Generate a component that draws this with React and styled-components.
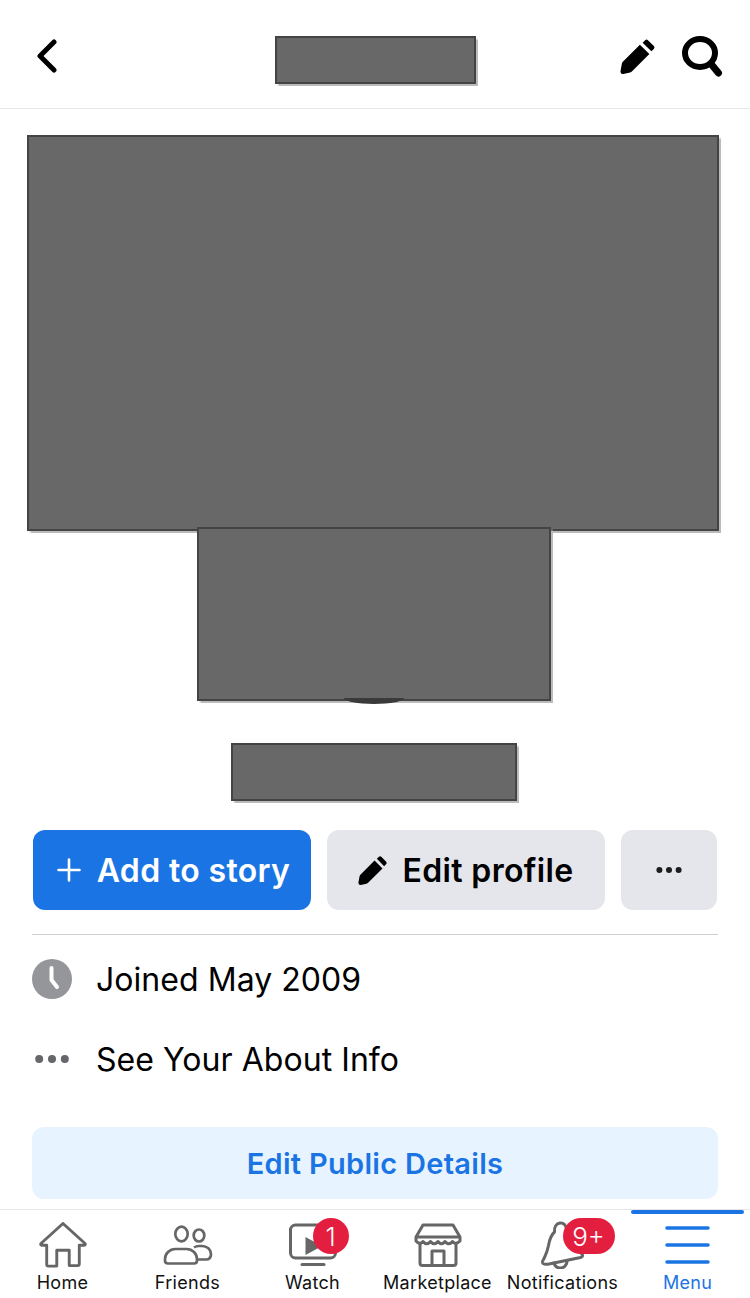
import React from "react";
import styled, { createGlobalStyle } from "styled-components";

const GlobalStyle = createGlobalStyle`
	html, body {
		margin: 0;
		padding: 0;
		background: #fff;
		font-family: Inter, "Liberation Sans", sans-serif;
	}
	* {
		box-sizing: border-box;
	}
`;

const TABS = [
	{ label: "Home", icon: <HomeIcon /> },
	{ label: "Friends", icon: <FriendsIcon /> },
	{ label: "Watch", icon: <WatchIcon />, badge: "1" },
	{ label: "Marketplace", icon: <ShopIcon /> },
	{ label: "Notifications", icon: <BellIcon />, badge: "9+" },
	{ label: "Menu", icon: <MenuIcon />, active: true },
];

function HomeIcon() {
	return (
		<svg width="48" height="46" viewBox="0 0 50 48" fill="none" stroke="#666" strokeWidth="3" strokeLinejoin="round" strokeLinecap="round">
			<path d="M2 22.5 25 1.5l23 21c.6.8.2 1.700-.8 1.700H42v19.600c0 1-.7 1.700-1.700 1.700H31.500V29.500h-13v16.500H9.700c-1 0-1.700-.7-1.700-1.700V24.200H2.800c-1 0-1.400-.9-.8-1.700Z" />
		</svg>
	);
}

function FriendsIcon() {
	return (
		<svg width="50" height="40" viewBox="0 0 50 40" fill="none" stroke="#666" strokeWidth="2.700">
			<ellipse cx="18.500" cy="9" rx="6.200" ry="7.300" />
			<ellipse cx="36" cy="10.500" rx="5.300" ry="6" />
			<path d="M5 38.500h26q3 0 3-3v-1c0-6-4.500-10.500-10.500-10.500h-11C6.500 24 2 28.500 2 34.500v1q0 3 3 3Z" />
			<path d="M31 22.500c1.500-1 3-1.500 5-1.500h3c5 0 9 3.500 9 8 0 3.500-2 5.500-5 5.500h-8.500" />
		</svg>
	);
}

function WatchIcon() {
	return (
		<svg width="48" height="44" viewBox="0 0 48 44" fill="none" stroke="#666" strokeWidth="3">
			<rect x="1.500" y="2" width="45" height="33" rx="5" />
			<path d="M18 16.500 30 23 18 29.500Z" fill="#666" />
			<path d="M13 41.500h22" strokeLinecap="round" />
		</svg>
	);
}

function ShopIcon() {
	return (
		<svg width="48" height="44" viewBox="0 0 48 44" fill="none" stroke="#666" strokeWidth="3" strokeLinejoin="round">
			<path d="M9 2h30l7 12v4c-3 3-5.500 3-7.500.5-2.500 3-5 3-7.500 0-2.500 3-4.500 3-7 0-2.500 3-5 3-7.500 0-2.500 3-5 3-7.500 0-2 2.500-4.500 2.500-7-.5v-4L9 2Z" />
			<path d="M2 14h44" />
			<path d="M6 21v19c0 1.500 1 2.500 2.500 2.500h31c1.500 0 2.500-1 2.500-2.500V21" />
			<path d="M18 42V28h12v14" />
		</svg>
	);
}

function BellIcon() {
	return (
		<svg width="48" height="48" viewBox="0 0 48 48" fill="none" stroke="#666" strokeWidth="3" strokeLinejoin="round" strokeLinecap="round">
			<path d="M15.500 11c-.5-5 2-8.500 5.500-9s6 2 6.500 6c5 2 9 6 10 11l2 9c.5 2.500 3 4.500 4 6 .5 1-.5 2-2 2.500L10 43c-3 .5-6 .5-6.500-1.500-.3-1.500 1-3 2-5 2-4 3-7 4-12 1-6 2-10 6-13.500Z" />
			<path d="M15 42c1 3.500 3.500 5 6.500 5s6-2.500 6.500-6" />
		</svg>
	);
}

function MenuIcon() {
	return (
		<svg width="46" height="40" viewBox="0 0 46 40" fill="none" stroke="#1b74e4" strokeWidth="3.500" strokeLinecap="round">
			<path d="M2 3h41M2 20h41M2 37h41" />
		</svg>
	);
}

function PencilIcon({ size }) {
	return (
		<svg width={size} height={size} viewBox="0 0 38 38" fill="#000">
			<path d="M23.900 4.900 26.500 2.300q1.500-1.500 3 0L35.700 8.500q1.500 1.500 0 3L33.100 14.100Z" />
			<path d="M21 7 31 17 12.800 35.200q-.9.900-2.100 1.200L3.500 38Q.5 38 .5 35L2 27q.3-1.200 1-2Z" />
		</svg>
	);
}

function App() {
	return (
		<>
			<GlobalStyle />
			<Page>
				<Header>
					<BackButton aria-label="Back">
						<svg width="24" height="34" viewBox="0 0 24 34" fill="none" stroke="#000" strokeWidth="5" strokeLinecap="round" strokeLinejoin="round">
							<path d="M19 3 5 17l14 14" />
						</svg>
					</BackButton>
					<Redacted $w={201} $h={48} />
					<HeaderActions>
						<PencilIcon size={36} />
						<svg width="42" height="42" viewBox="0 0 42 42" fill="none" stroke="#000" strokeWidth="6" strokeLinecap="round">
							<ellipse cx="19" cy="18" rx="15" ry="14" />
							<path d="M30.500 29.500 37.500 38" strokeWidth="7" />
						</svg>
					</HeaderActions>
				</Header>

				<Hero>
					<Cover>
						<Redacted $w={692} $h={396} />
					</Cover>
					<AvatarWrap>
						<AvatarCurve />
						<Redacted $w={354} $h={174} />
					</AvatarWrap>
					<NameBox>
						<Redacted $w={286} $h={58} />
					</NameBox>
				</Hero>

				<Actions>
					<ActionButton $primary>
						<svg width="24" height="24" viewBox="0 0 24 24" stroke="#fff" strokeWidth="2.600" strokeLinecap="round">
							<path d="M12 1.500v21M1.500 12h21" />
						</svg>
						Add to story
					</ActionButton>
					<ActionButton>
						<PencilIcon size={30} />
						Edit profile
					</ActionButton>
					<ActionButton $more aria-label="More">
						<Dots $color="#1c1c1c" $dot={6} />
					</ActionButton>
				</Actions>

				<Details>
					<DetailRow>
						<IconSlot>
							<svg width="40" height="40" viewBox="0 0 40 40">
								<circle cx="20" cy="20" r="20" fill="#959699" />
								<path d="M19.500 9v12l5.500 7" fill="none" stroke="#fff" strokeWidth="4" strokeLinecap="round" strokeLinejoin="round" />
							</svg>
						</IconSlot>
						Joined May 2009
					</DetailRow>
					<DetailRow>
						<IconSlot>
							<Dots $color="#65676b" $dot={8} />
						</IconSlot>
						See Your About Info
					</DetailRow>
				</Details>

				<EditDetails>Edit Public Details</EditDetails>

				<TabBar>
					{TABS.map((tab) => (
						<Tab key={tab.label} $active={tab.active}>
							<TabIcon>
								{tab.icon}
								{tab.badge && <Badge $wide={tab.badge.length > 1}>{tab.badge}</Badge>}
							</TabIcon>
							<TabLabel $active={tab.active}>{tab.label}</TabLabel>
						</Tab>
					))}
				</TabBar>
			</Page>
		</>
	);
}

export default App;

const Page = styled.div`
	width: 750px;
	height: 1298px;
	background: #fff;
	overflow: hidden;
	color: #000;
`;
const Header = styled.header`
	height: 109px;
	border-bottom: 1px solid #e6e6e6;
	display: grid;
	grid-template-columns: 1fr auto 1fr;
	align-items: center;
	padding: 0 27px;
	& > div:nth-child(2) {
		margin-top: 11px;
	}
`;
const BackButton = styled.div`
	display: flex;
	align-items: center;
	padding: 4px 0 0 8px;
`;
const HeaderActions = styled.div`
	display: flex;
	justify-content: flex-end;
	align-items: center;
	gap: 25px;
	padding-top: 4px;
`;
const Redacted = styled.div`
	width: ${(props) => props.$w}px;
	height: ${(props) => props.$h}px;
	background: #686868;
	border: 2px solid #444;
	box-shadow: 1.5px 1.5px 1px #bbb;
	flex-shrink: 0;
`;
const Hero = styled.section`
	display: flex;
	flex-direction: column;
	align-items: center;
	padding: 26px 2px 0 0;
`;
const Cover = styled.div`
	margin-right: 2px;
`;
const AvatarWrap = styled.div`
	position: relative;
	margin-top: -4px;
`;
const AvatarCurve = styled.div`
	position: absolute;
	left: 147px;
	bottom: -3px;
	width: 60px;
	height: 6px;
	background: #3a3a3a;
	border-radius: 0 0 30px 30px / 0 0 6px 6px;
`;
const NameBox = styled.div`
	margin-top: 42px;
`;
const Actions = styled.div`
	display: flex;
	gap: 16px;
	margin: 29px 33px 0;
`;
const ActionButton = styled.div`
	width: ${(props) => (props.$more ? "96px" : "278px")};
	height: 80px;
	padding-left: ${(props) => (props.$primary ? "3px" : "0")};
	border-radius: 12px;
	background: ${(props) => (props.$primary ? "#1b74e4" : "#e4e6eb")};
	color: ${(props) => (props.$primary ? "#fff" : "#000")};
	display: flex;
	align-items: center;
	justify-content: center;
	gap: ${(props) => (props.$primary ? "16px" : "14px")};
	font-size: 32px;
	font-weight: 560;
	letter-spacing: 0.35px;
`;
const Dots = styled.span`
	display: block;
	width: ${(props) => props.$dot}px;
	height: ${(props) => props.$dot}px;
	border-radius: 50%;
	background: ${(props) => props.$color};
	box-shadow: ${(props) => props.$dot * 1.6}px 0 0 ${(props) => props.$color},
		-${(props) => props.$dot * 1.6}px 0 0 ${(props) => props.$color};
`;
const Details = styled.div`
	margin: 24px 32px 0;
	border-top: 1px solid #cfcfcf;
	padding-top: 4px;
`;
const DetailRow = styled.div`
	height: 80px;
	display: flex;
	align-items: center;
	font-size: 32px;
	font-weight: 400;
	letter-spacing: 0.05px;
`;
const IconSlot = styled.div`
	width: 64px;
	padding-right: 24px;
	display: flex;
	justify-content: center;
	flex-shrink: 0;
`;
const EditDetails = styled.div`
	margin: 28px 32px 0;
	height: 72px;
	border-radius: 12px;
	background: #e7f3ff;
	color: #1b74e4;
	display: flex;
	align-items: center;
	justify-content: center;
	font-size: 29px;
	font-weight: 560;
	letter-spacing: 0.3px;
`;
const TabBar = styled.nav`
	margin-top: 10px;
	height: 89px;
	border-top: 1px solid #e6e6e6;
	display: grid;
	grid-template-columns: repeat(6, 125px);
`;
const Tab = styled.div`
	position: relative;
	display: flex;
	flex-direction: column;
	align-items: center;
	justify-content: flex-end;
	padding-bottom: 3px;
	${(props) =>
		props.$active &&
		`
		&::before {
			content: "";
			position: absolute;
			top: 0;
			left: 6px;
			width: 113px;
			height: 4px;
			border-radius: 2px;
			background: #1b74e4;
		}
	`}
`;
const TabIcon = styled.div`
	position: relative;
	height: 50px;
	margin-bottom: 1px;
	display: flex;
	align-items: center;
	justify-content: center;
`;
const TabLabel = styled.div`
	font-size: 18px;
	line-height: 24px;
	letter-spacing: 0.3px;
	white-space: nowrap;
	color: ${(props) => (props.$active ? "#1b74e4" : "#111")};
`;
const Badge = styled.span`
	position: absolute;
	top: -2px;
	left: 24px;
	height: 36px;
	width: ${(props) => (props.$wide ? "52px" : "36px")};
	border-radius: 18px;
	background: #e41e3f;
	color: #fff;
	font-size: 26px;
	font-weight: 300;
	display: flex;
	align-items: center;
	justify-content: center;
`;
